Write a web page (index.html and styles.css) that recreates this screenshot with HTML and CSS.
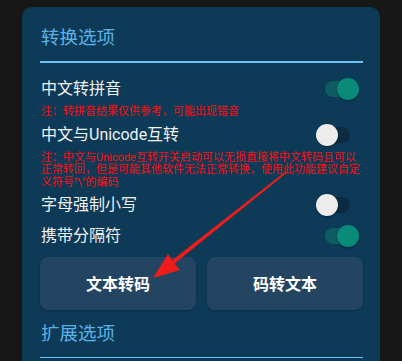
FILE: index.html
```html
<!DOCTYPE html>
<html lang="zh">
<head>
<meta charset="utf-8">
<link rel="stylesheet" href="styles.css">
</head>
<body>
<div class="card">
  <div class="section-title first">转换选项</div>
  <div class="divider"></div>

  <div class="row r1">
    <span class="label">中文转拼音</span>
    <span class="switch on"><span class="track"></span><span class="thumb"></span></span>
  </div>
  <div class="note n1">注：转拼音结果仅供参考，可能出现错音</div>

  <div class="row r2">
    <span class="label">中文与Unicode互转</span>
    <span class="switch"><span class="track"></span><span class="thumb"></span></span>
  </div>
  <div class="note n2">注：中文与Unicode互转开关启动可以无损直接将中文转码且可以正常转回，但是可能其他软件无法正常转换，使用此功能建议自定义符号"\"的编码</div>

  <div class="row r3">
    <span class="label">字母强制小写</span>
    <span class="switch"><span class="track"></span><span class="thumb"></span></span>
  </div>

  <div class="row r4">
    <span class="label">携带分隔符</span>
    <span class="switch on"><span class="track"></span><span class="thumb"></span></span>
  </div>

  <div class="buttons">
    <div class="btn">文本转码</div>
    <div class="btn">码转文本</div>
  </div>

  <div class="section-title second">扩展选项</div>
  <div class="divider"></div>
</div>

<svg class="arrow" width="402" height="361" viewBox="0 0 402 361">
  <polygon points="153,278 168,254 172.1,260.2 284.6,172.3 285.6,173.7 174.5,263.4 180,270" fill="#ee1c1a"/>
</svg>
</body>
</html>
```

FILE: styles.css
```css
html, body {
  margin: 0;
  padding: 0;
  overflow: hidden;
}
body {
  background: #171717;
  position: relative;
  width: 402px;
  height: 361px;
  font-family: Roboto, "Noto Sans CJK SC", sans-serif;
}
.card {
  margin: 7px 22px 0 22px;
  background: #0c3a57;
  border-radius: 10px 10px 0 0;
  padding: 19px 17px 40px 18px;
  display: flex;
  flex-direction: column;
}
.section-title {
  font-size: 18.5px;
  line-height: 24px;
  color: #5cb2e6;
  padding-left: 1px;
}
.section-title.second {
  margin-top: 12px;
}
.divider {
  height: 1.5px;
  background: #6cc2f2;
  margin-top: 11px;
}
.row {
  display: flex;
  align-items: center;
  justify-content: space-between;
  height: 28px;
}
.r1 { margin-top: 12px; }
.r2 { margin-top: 3px; }
.r3 { margin-top: 2px; }
.r4 { margin-top: 2.5px; }
.label {
  font-size: 16px;
  line-height: 20px;
  color: #f2f2f2;
  padding-left: 1px;
}
.note {
  font-size: 11px;
  color: #ff0d0d;
  font-family: Roboto, "Noto Sans CJK SC", sans-serif;
  padding-left: 1px;
}
.n1 {
  line-height: 13px;
  margin-top: 2px;
}
.n2 {
  line-height: 12.5px;
  margin-top: 3px;
}
.switch {
  position: relative;
  width: 43px;
  height: 22px;
  margin-right: 4px;
  flex: none;
}
.track {
  position: absolute;
  left: 9px;
  top: 3px;
  width: 25px;
  height: 16px;
  border-radius: 8px;
  background: #0a2b40;
}
.thumb {
  position: absolute;
  left: 0;
  top: 0;
  width: 22px;
  height: 22px;
  border-radius: 50%;
  background: #ececec;
  box-shadow: 0 1px 2px rgba(0,0,0,0.35);
}
.switch.on .track {
  background: #0f5b63;
}
.switch.on .thumb {
  left: 21px;
  background: #0a8a78;
}
.buttons {
  display: flex;
  gap: 11px;
  margin-top: 7px;
}
.btn {
  flex: 1;
  height: 53px;
  border-radius: 8px;
  background: #234561;
  color: #ffffff;
  font-weight: bold;
  font-size: 16px;
  display: flex;
  align-items: center;
  justify-content: center;
  box-shadow: 0 1px 2px rgba(0,0,0,0.2);
}
.arrow {
  position: absolute;
  left: 0;
  top: 0;
  pointer-events: none;
}
```
